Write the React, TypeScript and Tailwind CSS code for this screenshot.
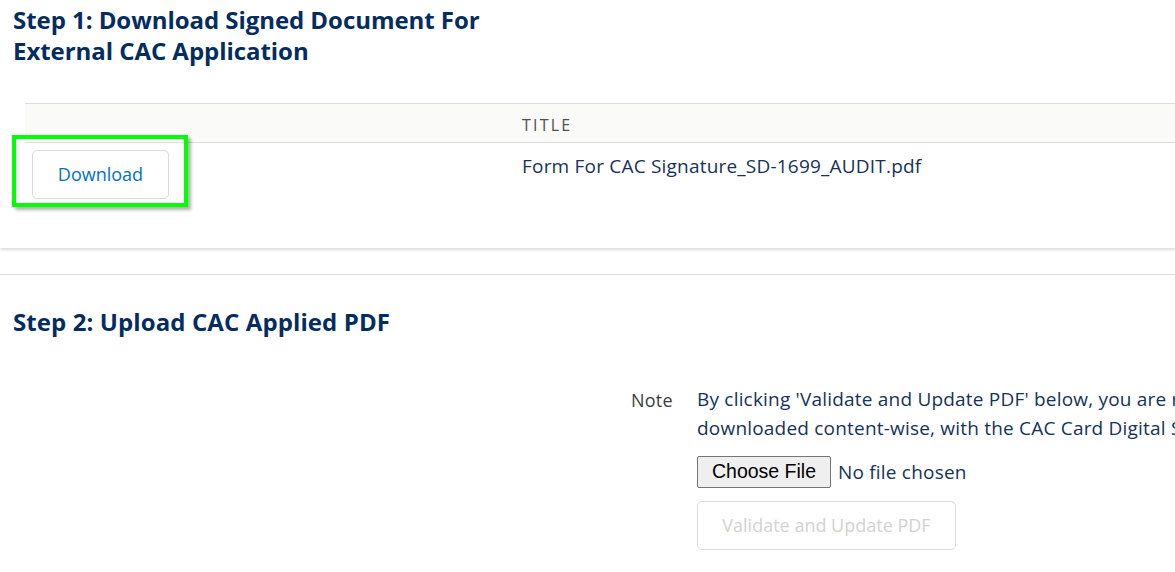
import React from "react";

const FILE_NAME = "Form For CAC Signature_SD-1699_AUDIT.pdf";

export default function App() {
  return (
    <div className="w-[1175px] h-[572px] overflow-hidden bg-white font-['Open_Sans',sans-serif] text-[#16325c]">
      {/* Step 1 card */}
      <section className="h-[248px] shadow-[0_2px_3px_rgba(0,0,0,0.14)]">
        <h2 className="pl-[13px] pt-[4px] text-[24px] font-bold leading-[31px] text-[#032d60] tracking-[-0.05px]">
          Step 1: Download Signed Document For
          <br />
          External CAC Application
        </h2>

        <div className="ml-[25px] mt-[37px]">
          <div className="flex h-[40px] items-center border-y border-[#dddbda] bg-[#fafaf9]">
            <div className="w-[497px]" />
            <div className="pt-[3px] text-[16px] uppercase tracking-[2.2px] text-[#514f4d]">Title</div>
          </div>
          <div className="flex pt-[7px]">
            <div className="relative w-[497px] pl-[7px]">
              <button className="h-[49px] w-[137px] rounded-[5px] border border-[#dddbda] bg-white text-[18px] text-[#0070d2]">
                Download
              </button>
              <div className="absolute left-[-13px] top-[-15px] h-[72px] w-[176px] border-[4px] border-[#00ff00] shadow-[3px_3px_3px_rgba(0,0,0,0.3)]" />
            </div>
            <div className="pt-[2px] text-[19px] tracking-[0.2px]">{FILE_NAME}</div>
          </div>
        </div>
      </section>

      {/* Step 2 card */}
      <section className="mt-[26px] border-t border-[#dddbda]">
        <h2 className="pl-[13px] pt-[31px] text-[24px] font-bold leading-[31px] text-[#032d60] tracking-[0.1px]">
          Step 2: Upload CAC Applied PDF
        </h2>

        <div className="mt-[48px] flex">
          <div className="w-[631px] shrink-0" />
          <div className="w-[66px] shrink-0 text-[18px] leading-[30px] tracking-[0.2px] text-[#3e3e3c]">Note</div>
          <div className="flex flex-col items-start">
            <p className="whitespace-nowrap text-[19px] leading-[29px] tracking-[0.2px]">
              By clicking 'Validate and Update PDF' below, you are making sure the uploaded PDF is the same as the one
              <br />
              downloaded content-wise, with the CAC Card Digital Signature applied.
            </p>
            <div className="mt-[13px] flex items-center gap-[7px]">
              <button className="h-[32px] w-[134px] rounded-[2px] border border-[#767676] bg-[#efefef] font-['Liberation_Sans',sans-serif] text-[19.5px] text-black">
                Choose File
              </button>
              <span className="text-[19px] tracking-[0.2px] text-[#16325c]">No file chosen</span>
            </div>
            <button
              disabled
              className="mt-[13px] h-[49px] w-[259px] rounded-[5px] border border-[#dddbda] bg-white text-[18px] text-[#d4d2d0]"
            >
              Validate and Update PDF
            </button>
          </div>
        </div>
      </section>
    </div>
  );
}
